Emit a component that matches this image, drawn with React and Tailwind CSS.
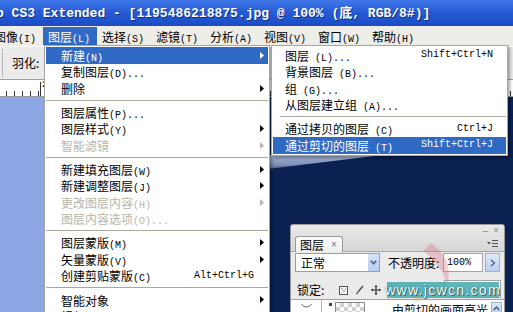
import React from 'react';

const cjk = "font-['Noto_Sans_CJK_SC','Noto_Sans',sans-serif]";
const mono = "font-['Liberation_Mono','Noto_Sans_CJK_SC',monospace]";

const topMenu = [
  { zh: '图像', k: '(I)' },
  { zh: '图层', k: '(L)', active: true },
  { zh: '选择', k: '(S)' },
  { zh: '滤镜', k: '(T)' },
  { zh: '分析', k: '(A)' },
  { zh: '视图', k: '(V)' },
  { zh: '窗口', k: '(W)' },
  { zh: '帮助', k: '(H)' },
];

const layerMenu = [
  { zh: '新建', k: '(N)', sub: true, active: true },
  { zh: '复制图层', k: '(D)...' },
  { zh: '删除', sub: true },
  'sep',
  { zh: '图层属性', k: '(P)...' },
  { zh: '图层样式', k: '(Y)', sub: true },
  { zh: '智能滤镜', sub: true, off: true },
  'sep',
  { zh: '新建填充图层', k: '(W)', sub: true },
  { zh: '新建调整图层', k: '(J)', sub: true },
  { zh: '更改图层内容', k: '(H)', sub: true, off: true },
  { zh: '图层内容选项', k: '(O)...', off: true },
  'sep',
  { zh: '图层蒙版', k: '(M)', sub: true },
  { zh: '矢量蒙版', k: '(V)', sub: true },
  { zh: '创建剪贴蒙版', k: '(C)', sc: 'Alt+Ctrl+G' },
  'sep',
  { zh: '智能对象', sub: true },
  { zh: '视频图层', sub: true },
];

const newMenu = [
  { zh: '图层', k: ' (L)...', sc: 'Shift+Ctrl+N' },
  { zh: '背景图层', k: ' (B)...' },
  { zh: '组', k: ' (G)...' },
  { zh: '从图层建立组', k: ' (A)...' },
  'sep',
  { zh: '通过拷贝的图层', k: ' (C)', sc: 'Ctrl+J' },
  { zh: '通过剪切的图层', k: ' (T)', sc: 'Shift+Ctrl+J', active: true },
];

function Label({ zh, k }) {
  return (
    <span className="whitespace-nowrap leading-none">
      <span className={`${cjk} text-[12px]`}>{zh}</span>
      {k && <span className={`${mono} text-[10px] whitespace-pre`}>{k}</span>}
    </span>
  );
}

function Arrow({ color }) {
  return (
    <svg width="4" height="7" viewBox="0 0 4 7" className="shrink-0">
      <path d="M0 0L4 3.5L0 7Z" fill={color} />
    </svg>
  );
}

function Sep({ inset }) {
  return (
    <div className="h-[7.5px] flex items-center">
      <div className={`h-[1px] flex-1 bg-[#aca899] ${inset ? 'ml-[7px]' : ''}`} />
    </div>
  );
}

function Row({ item, sub }) {
  const color = item.active ? 'text-white' : item.off ? 'text-[#b8b5a8]' : 'text-black';
  return (
    <div
      className={`h-[16.5px] flex items-center justify-between ${color} ${
        item.active ? 'bg-[#316ac5]' : ''
      } ${sub ? 'pl-[12px] pr-[13px]' : 'pl-[15px] pr-[4px]'}`}
    >
      <Label zh={item.zh} k={item.k} />
      {item.sc && (
        <span className={`${mono} text-[10px] leading-none ${sub ? '' : 'mr-[10px]'}`}>{item.sc}</span>
      )}
      {item.sub && <Arrow color={item.active ? '#fff' : item.off ? '#b8b5a8' : '#000'} />}
    </div>
  );
}

function Ruler() {
  const ticks = [];
  for (let x = 6; x < 513; x += 8) ticks.push(x);
  return (
    <div className="h-[17px] bg-white border-b border-[#9d9d9d] relative overflow-hidden">
      <svg width="513" height="17" className="block">
        {ticks.map((x) => (
          <line key={x} x1={x + 0.5} y1="11" x2={x + 0.5} y2="16" stroke="#333" strokeWidth="1" />
        ))}
        <line x1="40.5" y1="2" x2="40.5" y2="16" stroke="#333" strokeWidth="1" />
      </svg>
      <span className={`${mono} absolute left-[42px] top-[1px] text-[9px] leading-none text-black`}>2</span>
    </div>
  );
}

function LayersPanel() {
  return (
    <div className="absolute left-[290px] top-[224px] w-[215px] h-[100px] border border-[#9a9a9a] rounded-t-[3px] bg-[#ebebeb] overflow-hidden">
      {/* header with tab */}
      <div className="h-[27px] bg-gradient-to-b from-[#e9e9e9] to-[#d7d7d7] relative flex items-end pl-[4px] border-b border-[#a8a8a8]">
        <div className="absolute right-[5px] top-[1px] flex items-center gap-[5px] text-[#8c8c8c] text-[10px] leading-none font-['Liberation_Sans',sans-serif]">
          <span>–</span>
          <span>×</span>
        </div>
        <div className="h-[16px] w-[48px] bg-gradient-to-b from-[#fbfbfb] to-[#efefef] border border-b-0 border-[#9a9a9a] rounded-t-[3px] flex items-center pl-[4px] gap-[7px] mb-[-1px]">
          <span className={`${cjk} text-[12px] leading-none text-black`}>图层</span>
          <span className="text-[10px] leading-none text-[#777] font-['Liberation_Sans',sans-serif]">×</span>
        </div>
        <svg width="11" height="9" viewBox="0 0 11 9" className="ml-auto mr-[6px] mb-[3px]">
          <path d="M0 3H4L2 5.5Z" fill="#555" />
          <path d="M5 1.5H11M5 4.5H11M5 7.5H11" stroke="#555" strokeWidth="1" />
        </svg>
      </div>

      {/* blend mode + opacity */}
      <div className="h-[19px] mt-[1px] flex items-center pl-[4px]">
        <div className="w-[85px] h-[19px] bg-white border border-[#8f9fb8] flex items-center justify-between">
          <span className={`${cjk} text-[12px] leading-none text-black ml-[5px]`}>正常</span>
          <div className="w-[11px] h-[17px] bg-gradient-to-b from-[#d7e3f9] to-[#b7ccf2] flex items-center justify-center">
            <svg width="7" height="5" viewBox="0 0 7 5">
              <path d="M0.8 0.8L3.5 3.8L6.2 0.8" stroke="#44608f" strokeWidth="1.6" fill="none" />
            </svg>
          </div>
        </div>
        <span className={`${cjk} text-[12px] leading-none text-black ml-[8px] w-[55px] whitespace-nowrap`}>不透明度:</span>
        <div className="w-[40px] h-[19px] bg-white border border-[#a4a4a4] flex items-center">
          <span className={`${mono} text-[10px] leading-none text-black ml-[3px]`}>100%</span>
        </div>
        <div className="w-[15px] h-[19px] ml-[2px] bg-gradient-to-b from-[#dfe8f8] to-[#bccdee] border border-[#9fb1d4] flex items-center justify-center">
          <svg width="6" height="8" viewBox="0 0 6 8">
            <path d="M1 1L4.5 4L1 7" stroke="#44608f" strokeWidth="1.3" fill="none" />
          </svg>
        </div>
      </div>

      {/* lock row */}
      <div className="h-[16px] mt-[10px] flex items-center pl-[6px] relative">
        <span className={`${cjk} text-[12px] leading-none text-black`}>锁定:</span>
        <svg width="9" height="9" viewBox="0 0 9 9" className="ml-[15px]">
          <rect x="0.5" y="0.5" width="8" height="8" fill="#fff" stroke="#555" />
          <rect x="2" y="2" width="2" height="2" fill="#bbb" />
          <rect x="4" y="4" width="2" height="2" fill="#bbb" />
          <rect x="6" y="2" width="1" height="2" fill="#bbb" />
          <rect x="2" y="6" width="2" height="1" fill="#bbb" />
        </svg>
        <svg width="9" height="10" viewBox="0 0 9 10" className="ml-[7px]">
          <path d="M8 1L3 7" stroke="#555" strokeWidth="1.5" />
          <path d="M1 9.5C1.5 7.5 2.5 6.8 3.5 7.2L2.5 9Z" fill="#555" />
        </svg>
        <svg width="10" height="10" viewBox="0 0 10 10" className="ml-[7px]">
          <path d="M5 0.5V9.5M0.5 5H9.5" stroke="#333" strokeWidth="1.2" />
          <path d="M5 0L3.5 2H6.5ZM5 10L3.5 8H6.5ZM0 5L2 3.5V6.5ZM10 5L8 3.5V6.5Z" fill="#333" />
        </svg>
        <svg width="8" height="10" viewBox="0 0 8 10" className="ml-[6px]">
          <path d="M2 4.5V3A2 2 0 0 1 6 3V4.5" stroke="#444" strokeWidth="1.2" fill="none" />
          <rect x="0.5" y="4.5" width="7" height="5" fill="#444" />
        </svg>
        <div className="absolute left-[153px] top-[-2px] w-[57px] h-[18px] bg-white border border-[#a4a4a4]" />
      </div>

      {/* layer row */}
      <div className="h-[1px] bg-[#a0a0a0] mt-[1px]" />
      <div className="h-[20px] bg-white flex items-start relative">
        <div className="w-[31px] h-[20px] border-r border-[#b0b0b0] flex justify-center pt-[3px]">
          <svg width="11" height="6" viewBox="0 0 11 6">
            <path d="M0.5 1C3 5 8 5 10.5 1" stroke="#666" strokeWidth="1" fill="none" />
          </svg>
        </div>
        <div className="w-[3px] h-[3px] bg-[#444] mt-[3px] ml-[7px]" />
        <div className="w-[30px] h-[16px] mt-[2px] ml-[3px] border border-[#8a8a8a] bg-[repeating-conic-gradient(#d0d0d0_0_25%,#fff_0_50%)] bg-[length:8px_8px]" />
        <span className={`${cjk} text-[12px] leading-none text-black ml-[27px] mt-[4px] whitespace-nowrap`}>由剪切的画面高光</span>
        <div className="absolute right-[2px] top-[2px] w-[11px] h-[12px] bg-gradient-to-b from-[#dfe8f8] to-[#bccdee] border border-[#9fb1d4] flex items-center justify-center">
          <svg width="7" height="5" viewBox="0 0 7 5">
            <path d="M0.8 4L3.5 1L6.2 4" stroke="#44608f" strokeWidth="1.4" fill="none" />
          </svg>
        </div>
      </div>

      {/* watermark swoosh */}
      <svg width="70" height="70" viewBox="0 0 70 70" className="absolute left-[112px] top-[16px] pointer-events-none">
        <path d="M28 2C40 10 50 24 44 44C40 30 32 18 20 10Z" fill="#d9667a" opacity="0.32" />
        <path d="M10 50C22 44 36 46 46 56C34 54 22 56 12 62Z" fill="#f0a060" opacity="0.3" />
      </svg>
      <div className="absolute left-[96px] top-[57px] w-[112px] h-[16px] bg-[#4daeb1]/90 flex items-center justify-center">
        <span className="font-['Liberation_Sans',sans-serif] text-[14px] leading-none text-white tracking-[1.3px] [text-shadow:0_0_1px_#1e5558,1px_1px_0_#2a6a6d]">
          www.jcwcn.com
        </span>
      </div>
    </div>
  );
}

export default function App() {
  return (
    <div className="relative w-[513px] h-[312px] overflow-hidden bg-[#8ca7e3] flex flex-col">
      {/* title bar */}
      <div className="h-[26px] shrink-0 bg-gradient-to-b from-[#3f77e8] via-[#2459d4] to-[#1b4cc4] flex items-center overflow-hidden">
        <span
          className={`${mono} font-bold text-[13px] leading-none text-white whitespace-pre ml-[-4px] [text-shadow:1px_1px_0_rgba(0,20,80,0.6)]`}
        >
          p CS3 Extended - [1195486218875.jpg @ 100% (底, RGB/8#)]
        </span>
      </div>

      {/* menu bar */}
      <div className="h-[20px] shrink-0 bg-[#eeede8] flex items-start ml-[-11px]">
        {topMenu.map((m) => (
          <div
            key={m.zh}
            className={`w-[54px] h-[18px] mt-[1px] shrink-0 flex items-center pl-[5px] ${
              m.active ? 'bg-[#316ac5] text-white' : 'text-black'
            }`}
          >
            <Label zh={m.zh} k={m.k} />
          </div>
        ))}
      </div>

      {/* options bar */}
      <div className="h-[34px] shrink-0 bg-[#ebebeb] border-t border-white border-b border-b-[#a0a0a0] flex items-center">
        <div className="w-[1px] h-[28px] bg-[#b5b5b5] ml-[2px]" />
        <span className={`${cjk} text-[12px] leading-none text-black ml-[9px]`}>羽化:</span>
      </div>

      <Ruler />

      {/* workspace */}
      <div className="flex-1 flex">
        <div className="w-[160px] bg-[#8ca7e3]" />
        <div className="flex-1 bg-[#0b2152] relative">
          <svg width="353" height="200" className="absolute left-0 top-0">
            <defs>
              <linearGradient id="edge" x1="0" y1="0" x2="0" y2="1">
                <stop offset="0" stopColor="#a9b8d8" />
                <stop offset="0.7" stopColor="#7d8fb6" />
                <stop offset="1" stopColor="#4b5a7c" />
              </linearGradient>
            </defs>
            <polygon points="108,58 222,58 108,72" fill="url(#edge)" />
          </svg>
        </div>
      </div>

      {/* Layer menu */}
      <div className="absolute left-[44px] top-[45px] w-[226px] bg-white border border-[#a6a6a6] p-[1px] shadow-[2px_2px_3px_rgba(0,0,0,0.35)]">
        {layerMenu.map((item, i) => (item === 'sep' ? <Sep key={i} /> : <Row key={i} item={item} />))}
      </div>

      {/* New submenu */}
      <div className="absolute left-[271px] top-[45px] w-[237px] bg-white border border-[#a6a6a6] p-[1px] shadow-[2px_2px_3px_rgba(0,0,0,0.35)]">
        {newMenu.map((item, i) => (item === 'sep' ? <Sep key={i} inset /> : <Row key={i} item={item} sub />))}
      </div>

      <LayersPanel />
    </div>
  );
}
